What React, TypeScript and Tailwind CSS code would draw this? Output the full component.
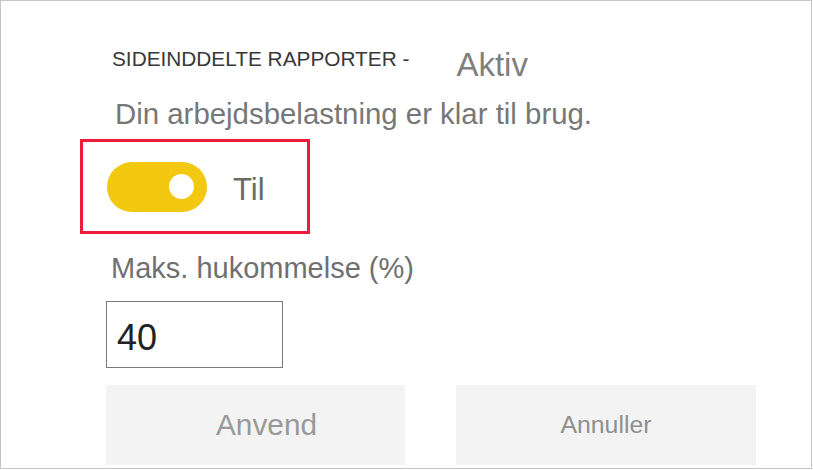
import React from "react";

export default function App() {
  return (
    <div
      className="w-[813px] h-[470px] bg-white"
      style={{ fontFamily: '"Liberation Sans", Arial, sans-serif' }}
    >
      <div className="w-[812px] h-[469px] border border-[#c6c6c6] flex flex-col pl-[105px] pt-[46px]">
        <div className="flex items-start">
          <span className="ml-[6px] text-[20.8px] leading-[24px] text-[#383838] whitespace-nowrap">
            SIDEINDDELTE RAPPORTER -
          </span>
          <span className="ml-[47px] mt-[-1px] text-[33px] leading-[38px] text-[#7f7f7f]">
            Aktiv
          </span>
        </div>
        <div className="ml-[9px] mt-[13px] text-[29.4px] leading-[34px] text-[#777777] whitespace-nowrap">
          Din arbejdsbelastning er klar til brug.
        </div>
        <div className="ml-[-26px] mt-[8px] w-[230px] h-[95px] border-[3px] border-[#ee1c3b] flex items-center pl-[24px]">
          <div className="w-[100px] h-[50px] rounded-full bg-[#f2c811] flex items-center justify-end pr-[13px]">
            <div className="w-[25px] h-[25px] rounded-full bg-white" />
          </div>
          <span className="ml-[26px] mt-[6px] text-[31px] leading-[36px] text-[#6b6b6b]">
            Til
          </span>
        </div>
        <div className="ml-[5px] mt-[17px] text-[29px] leading-[34px] text-[#707070] whitespace-nowrap">
          Maks. hukommelse (%)
        </div>
        <div className="mt-[16px] w-[177px] h-[67px] border border-[#7a7a7a] flex items-center pl-[10px] pt-[6px] text-[36px] leading-[40px] text-[#222222]">
          40
        </div>
        <div className="mt-[17px] flex gap-[51px]">
          <div className="w-[299px] h-[80px] bg-[#f3f3f3] flex items-center justify-center pl-[22px] text-[29.8px] leading-[34px] text-[#999999]">
            Anvend
          </div>
          <div className="w-[300px] h-[80px] bg-[#f3f3f3] flex items-center justify-center text-[24.8px] leading-[30px] text-[#8f8f8f]">
            Annuller
          </div>
        </div>
      </div>
    </div>
  );
}
